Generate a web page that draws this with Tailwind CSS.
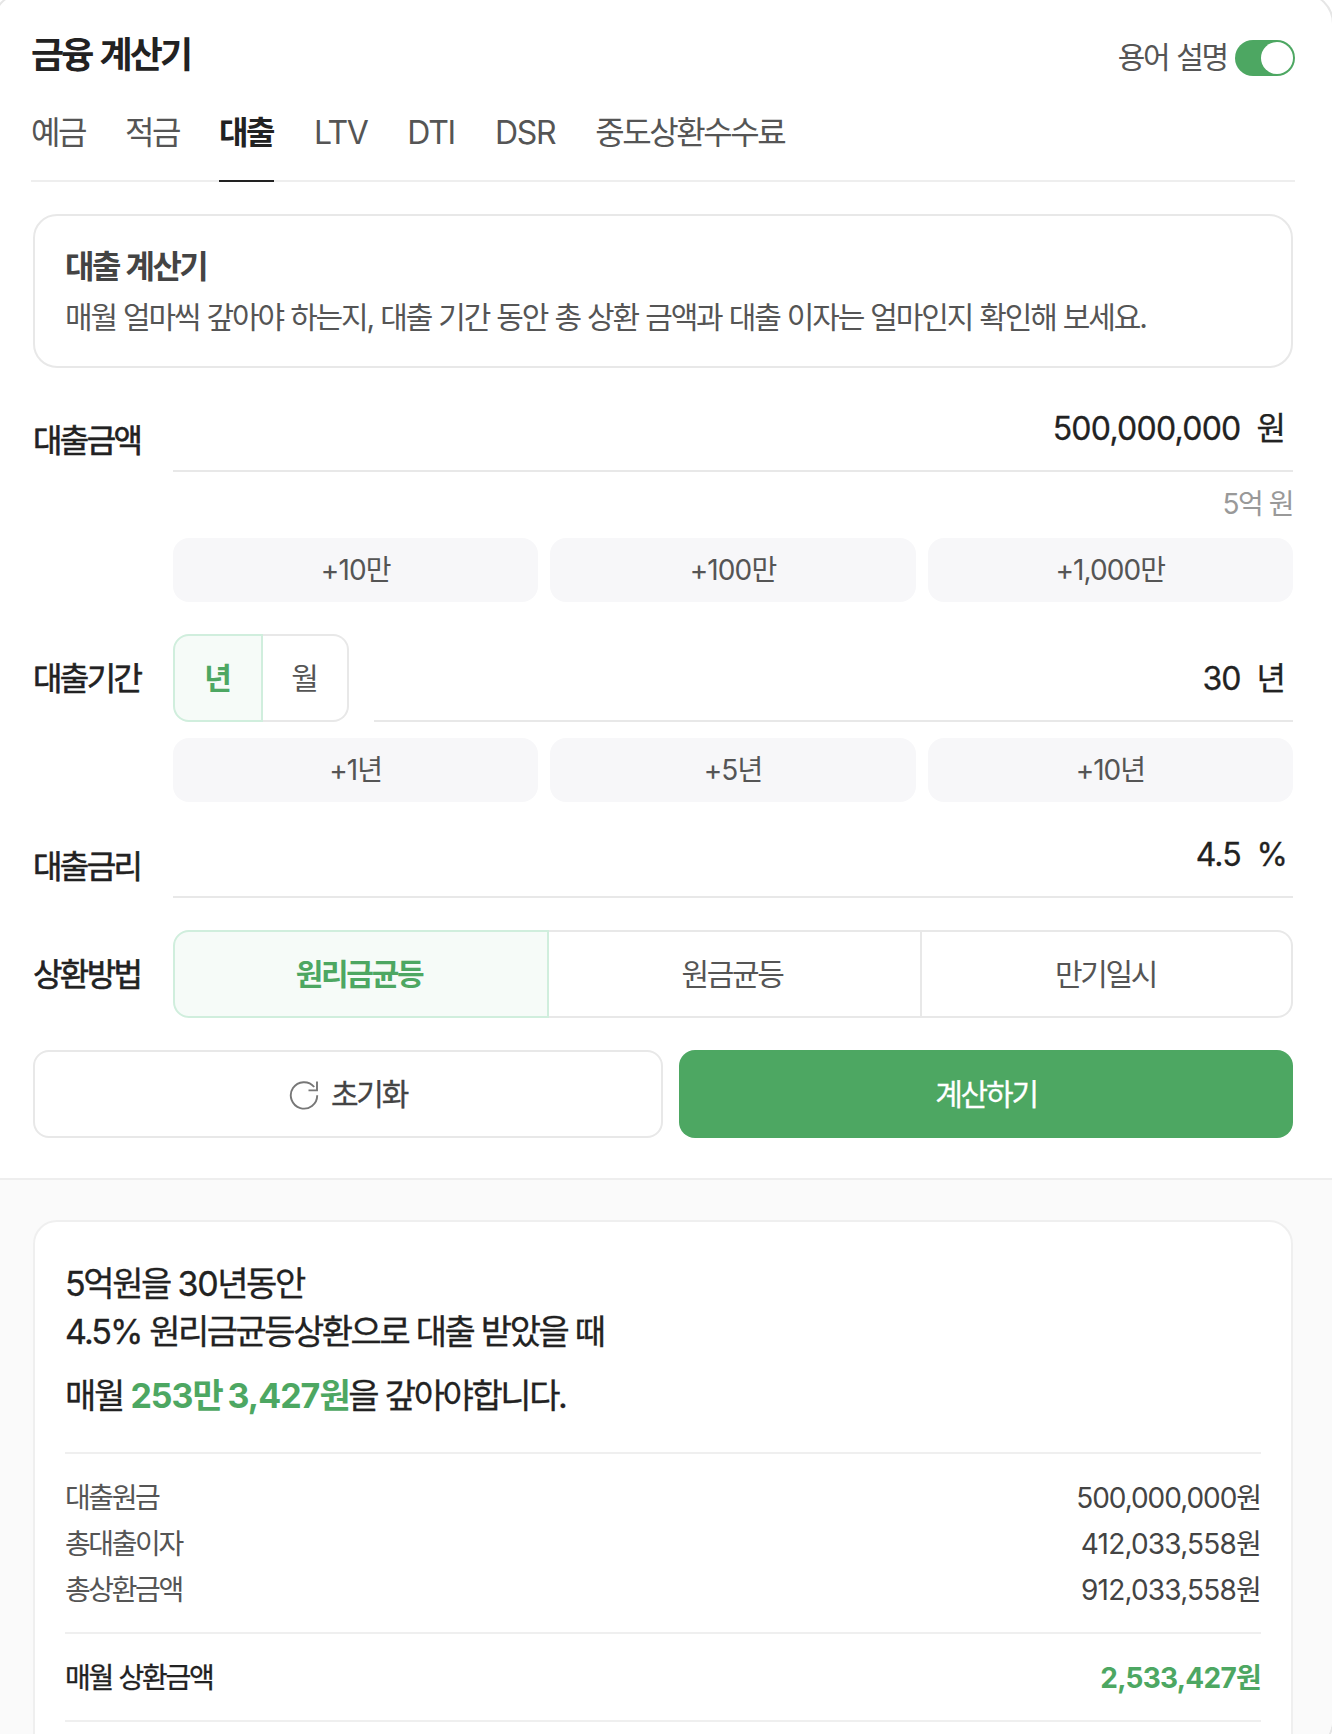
<!DOCTYPE html>
<html lang="ko">
<head>
<meta charset="utf-8">
<title>금융 계산기</title>
<script src="https://cdn.jsdelivr.net/npm/@tailwindcss/browser@4"></script>
</head>
<body class="h-[1734px] w-[1332px] overflow-hidden bg-white font-['Inter','Noto_Sans_CJK_KR',sans-serif] text-[#222]">
<div class="-mt-2 -ml-2 h-[1760px] w-[1342px] overflow-hidden rounded-[32px] border-2 border-[#e6e6e6]">
  <section class="h-[1184px] pt-1.5 pr-[37px] pl-[37px]">
    <header class="flex h-28 items-start justify-between pt-9">
      <h1 class="text-[36px] leading-[38px] font-bold whitespace-nowrap tracking-[-2.9px] [word-spacing:2.5px]">금융 계산기</h1>
      <div class="flex items-start pt-1 text-[#555]">
        <span class="-mt-px mr-2 text-[30px] leading-9 whitespace-nowrap tracking-[-2.2px] [word-spacing:1.5px]">용어 설명</span>
        <span class="flex h-9 w-[60px] items-center justify-end rounded-full bg-[#4da762] p-0.5"><span class="size-8 rounded-full bg-white"></span></span>
      </div>
    </header>
    <nav class="flex h-[70px] gap-10 border-b-2 border-[#eee] text-[32px] leading-[42px] text-[#555] whitespace-nowrap tracking-[-2.45px]">
      <span>예금</span>
      <span>적금</span>
      <span class="h-[70px] w-[55px] border-b-2 border-[#222] font-bold text-[#222]">대출</span>
      <span class="tracking-[-1.5px]">LTV</span>
      <span class="tracking-[-1.2px]">DTI</span>
      <span class="tracking-[-1.3px]">DSR</span>
      <span>중도상환수수료</span>
    </nav>

    <div class="mt-8 ml-0.5 h-[154px] w-[1260px] rounded-[24px] border-2 border-[#e8e8e8] px-[30px] pt-8">
      <h2 class="w-fit text-[32px] leading-[38px] font-bold whitespace-nowrap tracking-[-2.5px] [word-spacing:1.5px] text-[#444]">대출 계산기</h2>
      <p class="mt-[13px] w-fit text-[30px] leading-9 whitespace-nowrap tracking-[-2.15px] [word-spacing:0.9px] text-[#555]">매월 얼마씩 갚아야 하는지, 대출 기간 동안 총 상환 금액과 대출 이자는 얼마인지 확인해 보세요.</p>
    </div>

    <div class="ml-0.5 w-[1260px]">
      <div class="flex h-[104px] items-end">
        <div class="w-[140px] pb-[13px]"><span class="text-[32px] leading-9 whitespace-nowrap tracking-[-2.6px] [-webkit-text-stroke:0.6px]">대출금액</span></div>
        <div class="flex h-20 flex-1 justify-end border-b-2 border-[#e8e8e8] pt-[19px] pr-[7px] text-[32px] leading-9 [-webkit-text-stroke:0.3px]">
          <span class="tracking-[-0.75px]">500,000,000</span><span class="ml-4">원</span>
        </div>
      </div>
      <div class="flex h-[66px] items-start justify-end pt-[14px] text-[28px] leading-9 text-[#999]"><span class="tracking-[-1.5px]">5억 원</span></div>
      <div class="ml-[140px] grid grid-cols-3 gap-3 text-center text-[28px] leading-16 tracking-[-0.9px] text-[#555]">
        <span class="h-16 rounded-2xl bg-[#f7f7f9]">+10만</span>
        <span class="h-16 rounded-2xl bg-[#f7f7f9]">+100만</span>
        <span class="h-16 rounded-2xl bg-[#f7f7f9]">+1,000만</span>
      </div>

      <div class="mt-8 flex h-[88px] items-center">
        <div class="w-[140px] pt-0.5"><span class="text-[32px] leading-9 whitespace-nowrap tracking-[-2.6px] [-webkit-text-stroke:0.6px]">대출기간</span></div>
        <div class="flex h-[88px] w-[176px] text-center text-[30px] leading-[85px] text-[#555]">
          <span class="w-[90px] rounded-l-2xl border-2 border-[#d0eedd] bg-[#f6fbf8] font-bold text-[#4da762]">년</span>
          <span class="w-[86px] rounded-r-2xl border-2 border-l-0 border-[#e8e8e8]">월</span>
        </div>
        <div class="ml-[25px] flex h-[88px] flex-1 justify-end border-b-2 border-[#e8e8e8] pt-[27px] pr-[7px] text-[32px] leading-9 [-webkit-text-stroke:0.3px]">
          <span class="tracking-[-1px]">30</span><span class="ml-4">년</span>
        </div>
      </div>
      <div class="mt-4 ml-[140px] grid grid-cols-3 gap-3 text-center text-[28px] leading-16 tracking-[-1px] text-[#555]">
        <span class="h-16 rounded-2xl bg-[#f7f7f9]">+1년</span>
        <span class="h-16 rounded-2xl bg-[#f7f7f9]">+5년</span>
        <span class="h-16 rounded-2xl bg-[#f7f7f9]">+10년</span>
      </div>

      <div class="flex h-24 items-end">
        <div class="w-[140px] pb-[13px]"><span class="text-[32px] leading-9 whitespace-nowrap tracking-[-2.6px] [-webkit-text-stroke:0.6px]">대출금리</span></div>
        <div class="flex h-20 flex-1 justify-end border-b-2 border-[#e8e8e8] pt-[19px] pr-[5px] text-[32px] leading-9 [-webkit-text-stroke:0.3px]">
          <span class="tracking-[-1px]">4.5</span><span class="ml-4">%</span>
        </div>
      </div>

      <div class="mt-8 flex h-[88px] items-center">
        <div class="w-[140px] pt-0.5"><span class="text-[32px] leading-9 whitespace-nowrap tracking-[-2.6px] [-webkit-text-stroke:0.6px]">상환방법</span></div>
        <div class="flex h-[88px] flex-1 text-center text-[30px] leading-[85px] text-[#555] tracking-[-2.3px]">
          <span class="w-[376px] rounded-l-2xl border-2 border-[#d0eedd] bg-[#f6fbf8] pr-1 font-bold text-[#4da762]">원리금균등</span>
          <span class="w-[373px] border-2 border-l-0 border-[#e8e8e8] pr-[5px]">원금균등</span>
          <span class="w-[371px] rounded-r-2xl border-2 border-l-0 border-[#e8e8e8] pr-0.5">만기일시</span>
        </div>
      </div>

      <div class="mt-8 flex h-[88px] gap-4 text-[30px] leading-9 tracking-[-2.2px]">
        <div class="flex w-[630px] items-center justify-center gap-3 rounded-2xl border-2 border-[#e8e8e8] text-[#444]">
          <svg class="mt-0.5 size-[30px]" viewBox="0 0 30 30" fill="none" stroke="#777" stroke-width="1.9"><path d="M28.2 15.2A13.2 13.2 0 1 1 25.2 7M28 1.5V10.4H19.5"/></svg>
          <span class="[-webkit-text-stroke:0.3px]">초기화</span>
        </div>
        <div class="flex flex-1 items-center justify-center rounded-2xl bg-[#4da762] text-white"><span class="[-webkit-text-stroke:0.3px]">계산하기</span></div>
      </div>
    </div>
  </section>

  <section class="h-[560px] border-t-2 border-[#eee] bg-[#fafafa] pt-10 pl-[39px]">
    <div class="h-[600px] w-[1260px] rounded-[24px] border-2 border-[#efefef] bg-white px-[30px] pt-[38px]">
      <div class="text-[34px] leading-12 whitespace-nowrap tracking-[-2.4px] [word-spacing:0.5px] [-webkit-text-stroke:0.3px]">
        <p>5억원을 <span class="tracking-[-1.4px]">30</span>년동안</p>
        <p class="tracking-[-2.5px]"><span class="tracking-[-1.9px]">4.5%</span> 원리금균등상환으로 대출 받았을 때</p>
        <p class="mt-4">매월 <b class="text-[#4da762] [-webkit-text-stroke:0]"><span class="tracking-[-1px]">253</span>만 <span class="tracking-[-1px]">3,427</span>원</b>을 갚아야합니다.</p>
      </div>
      <div class="mt-8 flex h-[182px] flex-col border-y-2 border-[#efefef] pt-[21px] text-[28px] leading-[46px]">
        <div class="flex justify-between text-[#555]"><span class="tracking-[-2.4px]">대출원금</span><span class="tracking-[-1.05px] text-[#444]">500,000,000원</span></div>
        <div class="flex justify-between text-[#555]"><span class="tracking-[-2.4px]">총대출이자</span><span class="tracking-[-0.8px] text-[#444]">412,033,558원</span></div>
        <div class="flex justify-between text-[#555]"><span class="tracking-[-2.4px]">총상환금액</span><span class="tracking-[-0.8px] text-[#444]">912,033,558원</span></div>
      </div>
      <div class="flex h-[88px] items-center justify-between border-b-2 border-[#efefef] pt-0.5 text-[28px] leading-[46px]">
        <span class="tracking-[-2.3px] [word-spacing:1px] [-webkit-text-stroke:0.3px]">매월 상환금액</span><b class="tracking-[-0.75px] text-[#4da762]">2,533,427원</b>
      </div>
    </div>
  </section>
</div>
</body>
</html>
